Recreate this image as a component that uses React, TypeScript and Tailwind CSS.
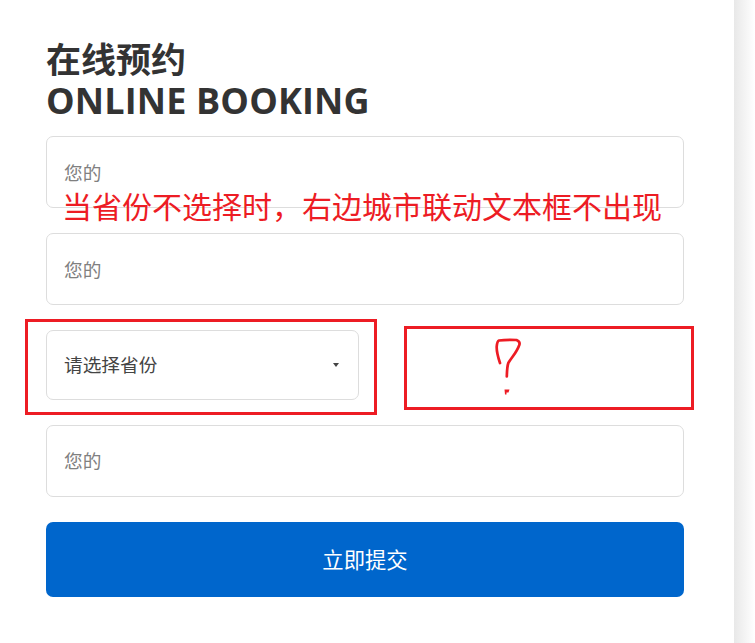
export default function App() {
  const input = "flex h-[72px] w-full items-center rounded-[7px] border border-[#dddddd] bg-white pl-[17px] text-[18.67px] text-[#808080]";
  return (
    <div className="relative flex h-[643px] w-[755px] overflow-hidden bg-white font-['Open_Sans','Noto_Sans_CJK_SC',sans-serif]">
      <main className="w-[734px] shrink-0 pl-[46px] pr-[50px] pt-[39px]">
        <h1 className="text-[35px] font-bold leading-[41px] text-[#333333]">
          <div>在线预约</div>
          <div className="text-[36px] tracking-[0.15px]">ONLINE BOOKING</div>
        </h1>
        <div className="mt-[15px] flex flex-col gap-[25px]">
          <div className={input + " pt-[2px]"}>您的</div>
          <div className={input + " pt-[2px]"}>您的</div>
          <div className="flex h-[70px] w-[313px] items-center justify-between rounded-[7px] border border-[#dddddd] bg-white pl-[17px] pr-[19px] text-[18.67px] text-[#444444]">
            <span>请选择省份</span>
            <span className="h-0 w-0 border-x-[3.5px] border-t-[4px] border-x-transparent border-t-[#444444]" />
          </div>
          <div className={input}>您的</div>
          <button className="flex h-[75px] w-full items-center justify-center rounded-[7px] bg-[#0066cc] text-[21.33px] text-white">立即提交</button>
        </div>
      </main>
      <aside className="h-full w-[21px] bg-gradient-to-r from-[#e8e8e8] to-[#ffffff]" />

      <div className="absolute left-[62px] top-[186px] whitespace-nowrap text-[30px] leading-[42px] text-[#ed1c24]">当省份不选择时，右边城市联动文本框不出现</div>
      <div className="absolute left-[25px] top-[319px] h-[96px] w-[352px] border-[3px] border-[#ed1c24]" />
      <div className="absolute left-[404px] top-[326px] h-[84px] w-[290px] border-[3px] border-[#ed1c24]" />
      <svg className="absolute left-[490px] top-[335px]" width="36" height="65" viewBox="0 0 36 65" fill="none">
        <path d="M10 28 C8 22 6.500 16 6.700 11.700 C7 8 7.500 6 9 5.500 C14 4.800 21 4.800 26.500 5 C29 6 30 8 29.300 10 C27 17 22 22 18.300 28 C17 32 17 37 16.800 41.500" stroke="#ed1c24" strokeWidth="2.700" strokeLinecap="round" strokeLinejoin="round" />
        <path d="M14.500 54.500 L19.500 54.500 L18.500 57.500 L16.500 57.500 L16.500 59.500 L15 59.500 Z" fill="#ed1c24" />
      </svg>
    </div>
  );
}
